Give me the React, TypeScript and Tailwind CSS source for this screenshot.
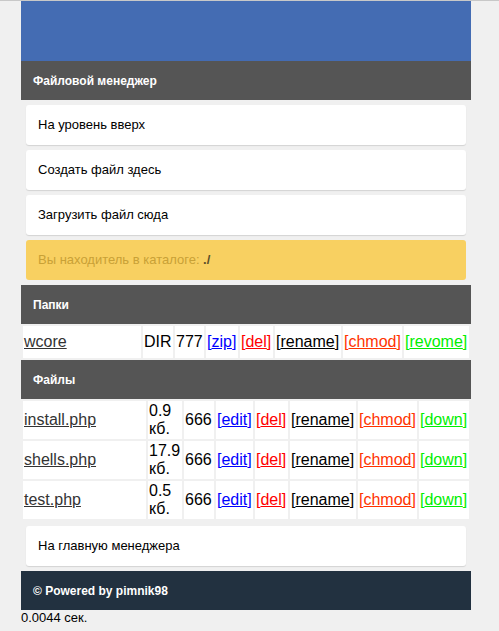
import React from "react";

const font = { fontFamily: '"Liberation Sans", Arial, sans-serif' };

function Bar({ children, dark }: { children: React.ReactNode; dark?: boolean }) {
  return (
    <div
      className={
        "h-[39px] flex items-center pl-[12px] text-[12px] font-bold text-white " +
        (dark ? "bg-[#223140]" : "bg-[#555555]")
      }
    >
      {children}
    </div>
  );
}

function Card({ children }: { children: React.ReactNode }) {
  return (
    <div className="mx-[5px] mt-[5px] h-[40px] flex items-center pl-[12px] bg-white rounded-[3px] shadow-[0_1px_1px_rgba(0,0,0,0.12)] text-[13px] text-black">
      {children}
    </div>
  );
}

function Act({ label, color }: { label: string; color: string }) {
  return (
    <span className={color}>
      [<a className="underline" href="#">{label}</a>]
    </span>
  );
}

const td = "bg-white p-px align-middle whitespace-nowrap";

export default function App() {
  const files = [
    { name: "install.php", size: "0.9 кб." },
    { name: "shells.php", size: "17.9 кб." },
    { name: "test.php", size: "0.5 кб." },
  ];
  return (
    <div className="min-h-[631px] bg-[#f0f0f0] border-t border-[#c8c8c8]" style={font}>
      <div className="ml-[21px] w-[450px] flow-root">
        <div className="h-[60px] bg-[#446cb3]" />
        <Bar>Файловой менеджер</Bar>
        <Card>На уровень вверх</Card>
        <Card>Создать файл здесь</Card>
        <Card>Загрузить файл сюда</Card>
        <div className="mx-[5px] mt-[5px] mb-[5px] h-[40px] flex items-center pl-[12px] bg-[#f8d061] rounded-[3px] text-[13px] text-[#c9a136]">
          Вы находитель в каталоге:&nbsp;<b className="text-[#5c4f2a]">./</b>
        </div>
        <Bar>Папки</Bar>
        <table className="w-[450px] table-fixed border-separate border-spacing-[2px] text-[16px] leading-[18px] text-black">
          <tbody>
            <tr className="h-[32px]">
              <td className={td}>
                <a href="#" className="underline text-[#333]">wcore</a>
              </td>
              <td className={td + " w-[30px]"}>DIR</td>
              <td className={td + " w-[29px]"}>777</td>
              <td className={td + " w-[32px]"}><Act label="zip" color="text-[#0000ff]" /></td>
              <td className={td + " w-[33px]"}><Act label="del" color="text-[#ff0000]" /></td>
              <td className={td + " w-[66px]"}><Act label="rename" color="text-black" /></td>
              <td className={td + " w-[59px]"}><Act label="chmod" color="text-[#ff3300]" /></td>
              <td className={td + " w-[65px]"}><Act label="revome" color="text-[#00ee00]" /></td>
            </tr>
          </tbody>
        </table>
        <Bar>Файлы</Bar>
        <table className="w-[450px] table-fixed border-separate border-spacing-[2px] text-[16px] leading-[18px] text-black">
          <tbody>
            {files.map((f) => (
              <tr key={f.name} className="h-[38px]">
                <td className={td}>
                  <a href="#" className="underline text-[#333]">{f.name}</a>
                </td>
                <td className={"bg-white p-px align-middle w-[34px] whitespace-normal"}>{f.size}</td>
                <td className={td + " w-[30px]"}>666</td>
                <td className={td + " w-[37px]"}><Act label="edit" color="text-[#0000ff]" /></td>
                <td className={td + " w-[33px]"}><Act label="del" color="text-[#ff0000]" /></td>
                <td className={td + " w-[66px]"}><Act label="rename" color="text-black" /></td>
                <td className={td + " w-[59px]"}><Act label="chmod" color="text-[#ff3300]" /></td>
                <td className={td + " w-[50px]"}><Act label="down" color="text-[#00ee00]" /></td>
              </tr>
            ))}
          </tbody>
        </table>
        <Card>На главную менеджера</Card>
        <div className="mt-[5px]">
          <Bar dark>© Powered by pimnik98</Bar>
        </div>
        <div className="text-[13px] leading-[15px] text-black">0.0044 сек.</div>
      </div>
    </div>
  );
}
